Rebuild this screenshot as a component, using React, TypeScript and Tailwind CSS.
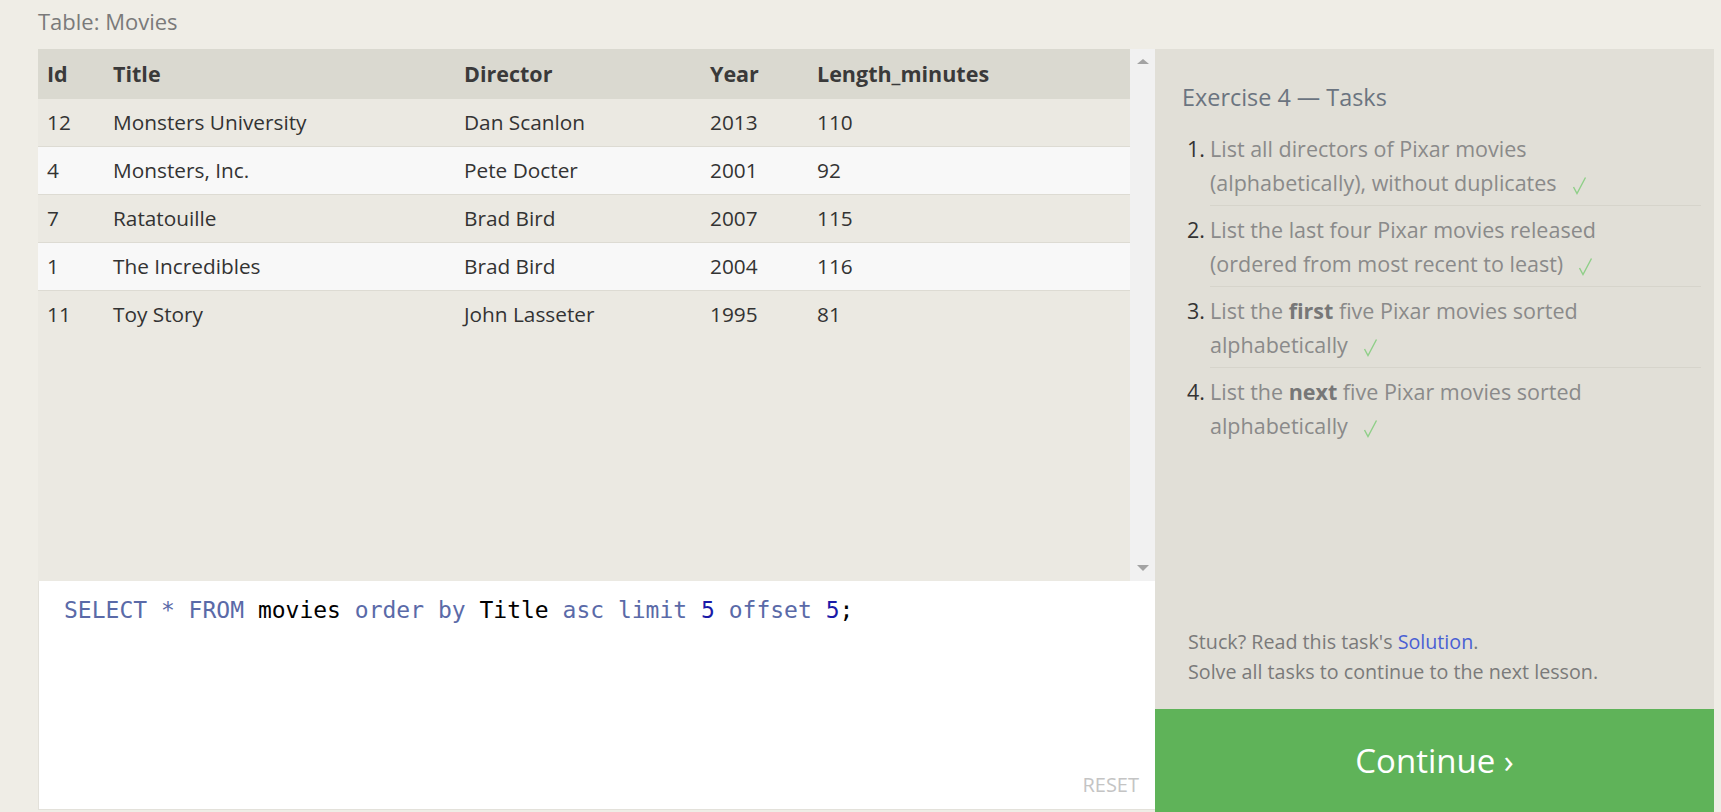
const sans = { fontFamily: '"Open Sans", "Noto Sans", sans-serif' }

const rows = [
  ["12", "Monsters University", "Dan Scanlon", "2013", "110"],
  ["4", "Monsters, Inc.", "Pete Docter", "2001", "92"],
  ["7", "Ratatouille", "Brad Bird", "2007", "115"],
  ["1", "The Incredibles", "Brad Bird", "2004", "116"],
  ["11", "Toy Story", "John Lasseter", "1995", "81"],
]

const cols = "grid grid-cols-[66px_351px_246px_107px_1fr]"

const Check = () => (
  <svg width="15" height="19" viewBox="0 0 15 19" className="inline-block ml-[15px] -mb-[1px]">
    <polyline points="1.5,11 5,17.5 13.5,1.5" fill="none" stroke="#8fcf88" strokeWidth="1.4" />
  </svg>
)

const tasks = [
  <>List all directors of Pixar movies<br />(alphabetically), without duplicates<Check /></>,
  <>List the last four Pixar movies released<br />(ordered from most recent to least)<Check /></>,
  <>List the <b className="font-bold text-[#777]">first</b> five Pixar movies sorted<br />alphabetically<Check /></>,
  <>List the <b className="font-bold text-[#777]">next</b> five Pixar movies sorted<br />alphabetically<Check /></>,
]

const App = () => {
  return (
    <div className="h-[812px] w-[1721px] overflow-hidden bg-[#efede6]" style={sans}>
      <div className="h-[49px] pl-[38px] pt-[6px] text-[22px] leading-[30px] text-[#7a7a7a]">Table: Movies</div>

      <div className="flex ml-[38px] w-[1676px] h-[763px]">
        {/* left: table + editor */}
        <div className="flex flex-col w-[1117px]">
          <div className="flex h-[532px] bg-[#ebe9e2]">
            <div className="flex-1 text-[20.8px] text-[#333]">
              <div className={`${cols} h-[50px] items-center bg-[#dad9d0] font-bold text-[21.5px] text-[#3a3a3a]`}>
                <span className="pl-[9px]">Id</span>
                <span className="pl-[9px]">Title</span>
                <span className="pl-[9px]">Director</span>
                <span className="pl-[9px]">Year</span>
                <span className="pl-[9px]">Length_minutes</span>
              </div>
              {rows.map((r, i) => (
                <div key={i} className={`${cols} h-[48px] items-center ${i % 2 ? "bg-[#f8f8f8]" : "bg-[#ebe9e2]"} ${i < 4 ? "border-b border-[#dddbd3]" : ""}`}>
                  {r.map((c, j) => (
                    <span key={j} className="pl-[9px]">{c}</span>
                  ))}
                </div>
              ))}
            </div>
            <div className="w-[25px] bg-[#f1f1f1] flex flex-col items-center justify-between pt-[10px] pb-[10px]">
              <div className="w-0 h-0 border-l-[6px] border-r-[6px] border-b-[5px] border-l-transparent border-r-transparent border-b-[#a3a3a3]" />
              <div className="w-0 h-0 border-l-[6px] border-r-[6px] border-t-[6px] border-l-transparent border-r-transparent border-t-[#a3a3a3]" />
            </div>
          </div>
          <div className="flex flex-col justify-between h-[229px] bg-white border-l border-b border-[#e3e1da] pl-[25px] pr-[16px] pt-[14px] pb-[12px]">
            <div className="text-[23px] leading-[30px]" style={{ fontFamily: '"DejaVu Sans Mono", monospace' }}>
              <span className="text-[#5a6aa8]">SELECT * FROM </span>
              <span className="text-black">movies </span>
              <span className="text-[#5a6aa8]">order by </span>
              <span className="text-black">Title </span>
              <span className="text-[#5a6aa8]">asc limit </span>
              <span className="text-[#1a1aa8]">5 </span>
              <span className="text-[#5a6aa8]">offset </span>
              <span className="text-[#1a1aa8]">5</span>
              <span className="text-black">;</span>
            </div>
            <div className="self-end text-[20px] leading-[24px] text-[#c4c4c4]">RESET</div>
          </div>
        </div>

        {/* right: tasks panel */}
        <div className="flex flex-col w-[559px] bg-[#e1dfd7]">
          <div className="flex-1 pl-[27px] pr-[13px] pt-[33px]">
            <h2 className="text-[23.4px] leading-[30px] text-[#6b7480]">Exercise 4 — Tasks</h2>
            <ol className="mt-[13px] pl-[5px]">
              {tasks.map((t, i) => (
                <li key={i} className="flex text-[21.5px] leading-[34px]">
                  <span className="w-[23px] shrink-0 whitespace-nowrap pt-[7px] text-[#333]">{i + 1}.</span>
                  <div className={`flex-1 pt-[7px] pb-[5px] text-[#8a8a8a] ${i < 3 ? "border-b border-[#d6d4cb]" : ""}`}>{t}</div>
                </li>
              ))}
            </ol>
          </div>
          <div className="pl-[33px] pb-[22px] text-[19.7px] leading-[30px] text-[#7a7a7a]">
            <p>Stuck? Read this task's <a className="text-[#4a5fd4]">Solution</a>.</p>
            <p>Solve all tasks to continue to the next lesson.</p>
          </div>
          <div className="h-[103px] bg-[#5fb359] flex items-center justify-center text-white text-[33px]">
            Continue ›
          </div>
        </div>
      </div>
    </div>
  )
}

export default App
